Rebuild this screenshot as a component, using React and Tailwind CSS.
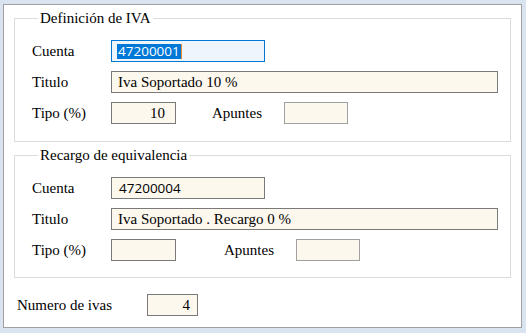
function Label({ className = "", children }) {
  return (
    <span className={`font-['Liberation_Serif'] text-[15px] leading-[17px] text-black shrink-0 ${className}`}>
      {children}
    </span>
  );
}

function Row({ label, children }) {
  return (
    <div className="flex items-center h-[22px]">
      <Label className="w-[79px]">{label}</Label>
      {children}
    </div>
  );
}

function Group({ title, cuenta, focused, titulo, tipo, apuntesGap, className }) {
  return (
    <fieldset className={`border border-[#dcdcdc] pl-[17px] pr-[12px] pt-[13px] ${className}`}>
      <legend className="ml-[6px] px-[2px] font-['Liberation_Serif'] text-[15px] leading-[17px] text-black">
        {title}
      </legend>
      <div className="flex flex-col gap-[9px]">
        <Row label="Cuenta">
          {focused ? (
            <div className="h-[22px] w-[154px] shrink-0 border border-[#0078d7] bg-[#eef5fc] flex items-center pl-[5px]">
              <span className="font-['Open_Sans'] text-[13.5px] leading-[15px] bg-[#0078d7] text-white px-[1px] border-r border-[#f08a24]">
                {cuenta}
              </span>
            </div>
          ) : (
            <div className="h-[22px] w-[154px] shrink-0 border border-[#7a7a7a] bg-[#fdf8ee] flex items-center pl-[7px]">
              <span className="font-['Open_Sans'] text-[13.5px] leading-[15px] text-black">{cuenta}</span>
            </div>
          )}
        </Row>
        <Row label="Titulo">
          <div className="h-[22px] w-[387px] shrink-0 border border-[#7a7a7a] bg-[#fdf8ee] flex items-center pl-[6px]">
            <Label>{titulo}</Label>
          </div>
        </Row>
        <Row label="Tipo (%)">
          <div className="h-[22px] w-[65px] shrink-0 border border-[#7a7a7a] bg-[#fdf8ee] flex items-center justify-end pr-[10px]">
            <Label>{tipo}</Label>
          </div>
          <Label className={`w-[72px] ${apuntesGap}`}>Apuntes</Label>
          <div className="h-[22px] w-[64px] shrink-0 border border-[#a0a0a0] bg-[#fdf8ee]" />
        </Row>
      </div>
    </fieldset>
  );
}

export default function App() {
  return (
    <div className="w-[526px] h-[333px] bg-[#d9e4f0] pt-[4px] pl-[3px] font-serif">
      <div className="w-[519px] border border-[#a0a0a0] bg-white px-[10px] pt-[5px] pb-[11px]">
        <Group
          title="Definición de IVA"
          cuenta="47200001"
          focused
          titulo="Iva Soportado 10 %"
          tipo="10"
          apuntesGap="ml-[36px]"
          className="pb-[17px]"
        />
        <Group
          title="Recargo de equivalencia"
          cuenta="47200004"
          titulo="Iva Soportado . Recargo 0 %"
          tipo=""
          apuntesGap="ml-[48px]"
          className="mt-[5px] pb-[16px]"
        />
        <div className="flex items-center h-[22px] mt-[16px] pl-[3px]">
          <Label className="w-[130px]">Numero de ivas</Label>
          <div className="h-[22px] w-[51px] shrink-0 border border-[#7a7a7a] bg-[#fdf8ee] flex items-center justify-end pr-[7px]">
            <Label>4</Label>
          </div>
        </div>
      </div>
    </div>
  );
}
